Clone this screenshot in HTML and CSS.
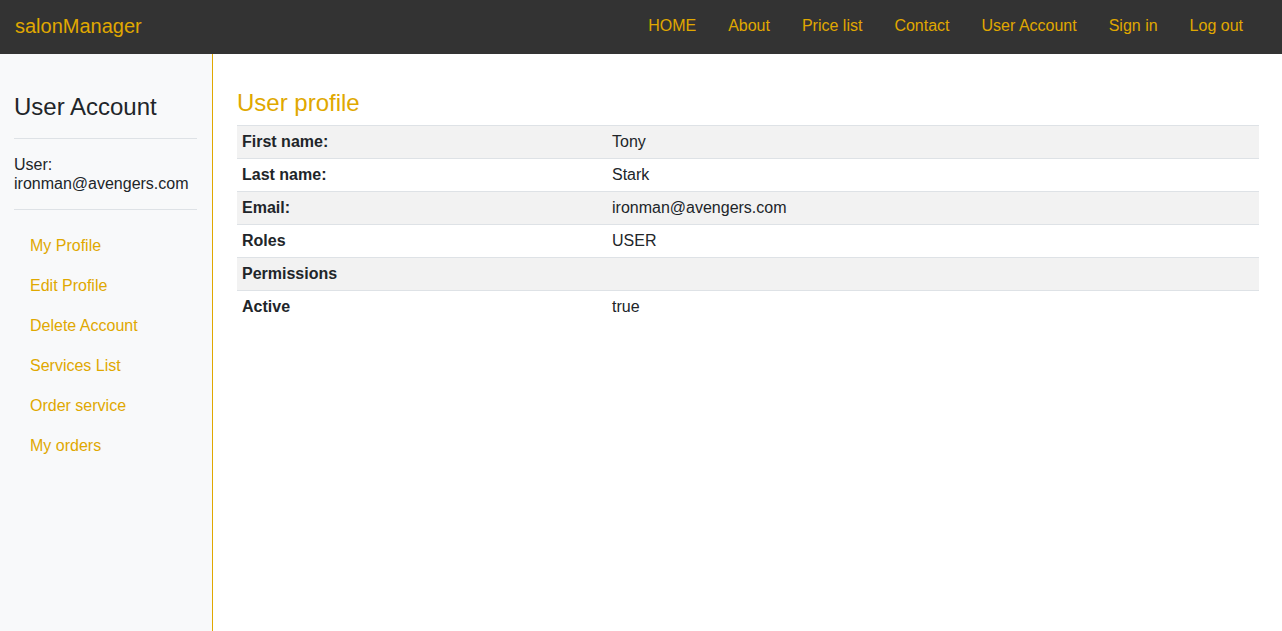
FILE: index.html
```html
<!DOCTYPE html>
<html lang="en">
<head>
<meta charset="utf-8">
<title>salonManager</title>
<link rel="stylesheet" href="styles.css">
</head>
<body>
<header class="navbar">
  <a class="brand" href="#">salonManager</a>
  <nav class="topnav">
    <a href="#">HOME</a>
    <a href="#">About</a>
    <a href="#">Price list</a>
    <a href="#">Contact</a>
    <a href="#">User Account</a>
    <a href="#">Sign in</a>
    <a href="#">Log out</a>
  </nav>
</header>
<div class="layout">
  <aside class="sidebar">
    <h3 class="side-title">User Account</h3>
    <hr class="rule rule-top">
    <p class="user-info">User:<br>ironman@avengers.com</p>
    <hr class="rule rule-bottom">
    <ul class="side-nav">
      <li><a href="#">My Profile</a></li>
      <li><a href="#">Edit Profile</a></li>
      <li><a href="#">Delete Account</a></li>
      <li><a href="#">Services List</a></li>
      <li><a href="#">Order service</a></li>
      <li><a href="#">My orders</a></li>
    </ul>
  </aside>
  <main class="content">
    <h2 class="page-title">User profile</h2>
    <table class="profile">
      <tbody>
        <tr><th>First name:</th><td>Tony</td></tr>
        <tr><th>Last name:</th><td>Stark</td></tr>
        <tr><th>Email:</th><td>ironman@avengers.com</td></tr>
        <tr><th>Roles</th><td>USER</td></tr>
        <tr><th>Permissions</th><td></td></tr>
        <tr><th>Active</th><td>true</td></tr>
      </tbody>
    </table>
  </main>
</div>
</body>
</html>
```

FILE: styles.css
```css
* { box-sizing: border-box; }
html, body { height: 100%; }
body {
  margin: 0;
  font-family: "Liberation Sans", Arial, sans-serif;
  font-size: 16px;
  line-height: 1.5;
  color: #212529;
  background: #fff;
  display: flex;
  flex-direction: column;
}
a { text-decoration: none; color: #e0a800; }

.navbar {
  height: 54px;
  flex: 0 0 54px;
  background: #333333;
  display: flex;
  align-items: center;
  justify-content: space-between;
  padding: 0 23px 0 15px;
}
.brand {
  font-size: 20px;
  line-height: 30px;
  margin-bottom: 2px;
}
.topnav { display: flex; }
.topnav a {
  padding: 8px 16px;
  line-height: 24px;
  margin-top: -2px;
}

.layout {
  flex: 1;
  display: flex;
}
.sidebar {
  width: 213px;
  flex: 0 0 213px;
  background: #f8f9fa;
  border-right: 1px solid #e0a800;
  padding: 0 15px 0 14px;
}
.side-title {
  margin: 39px 0 0;
  font-size: 24px;
  font-weight: 400;
  line-height: 1.2;
}
.rule {
  border: 0;
  border-top: 1px solid #dee2e6;
  margin: 0;
}
.rule-top { margin-top: 16px; }
.user-info {
  margin: 16px 0 16px;
  line-height: 1.2;
}
.side-nav {
  list-style: none;
  margin: 16px 0 0;
  padding: 0;
}
.side-nav a {
  display: block;
  padding: 8px 16px;
  line-height: 24px;
}

.content {
  flex: 1;
  padding: 35px 23px 0 24px;
}
.page-title {
  margin: 0 0 7px;
  font-size: 24px;
  font-weight: 400;
  line-height: 28.8px;
  color: #e0a800;
}
.profile {
  width: 100%;
  border-collapse: collapse;
}
.profile th, .profile td {
  text-align: left;
  padding: 4px 5px;
  line-height: 24px;
  border-top: 1px solid #dee2e6;
  height: 33px;
}
.profile th { width: 370px; font-weight: 700; }
.profile tr:nth-child(odd) { background: #f2f2f2; }
```
